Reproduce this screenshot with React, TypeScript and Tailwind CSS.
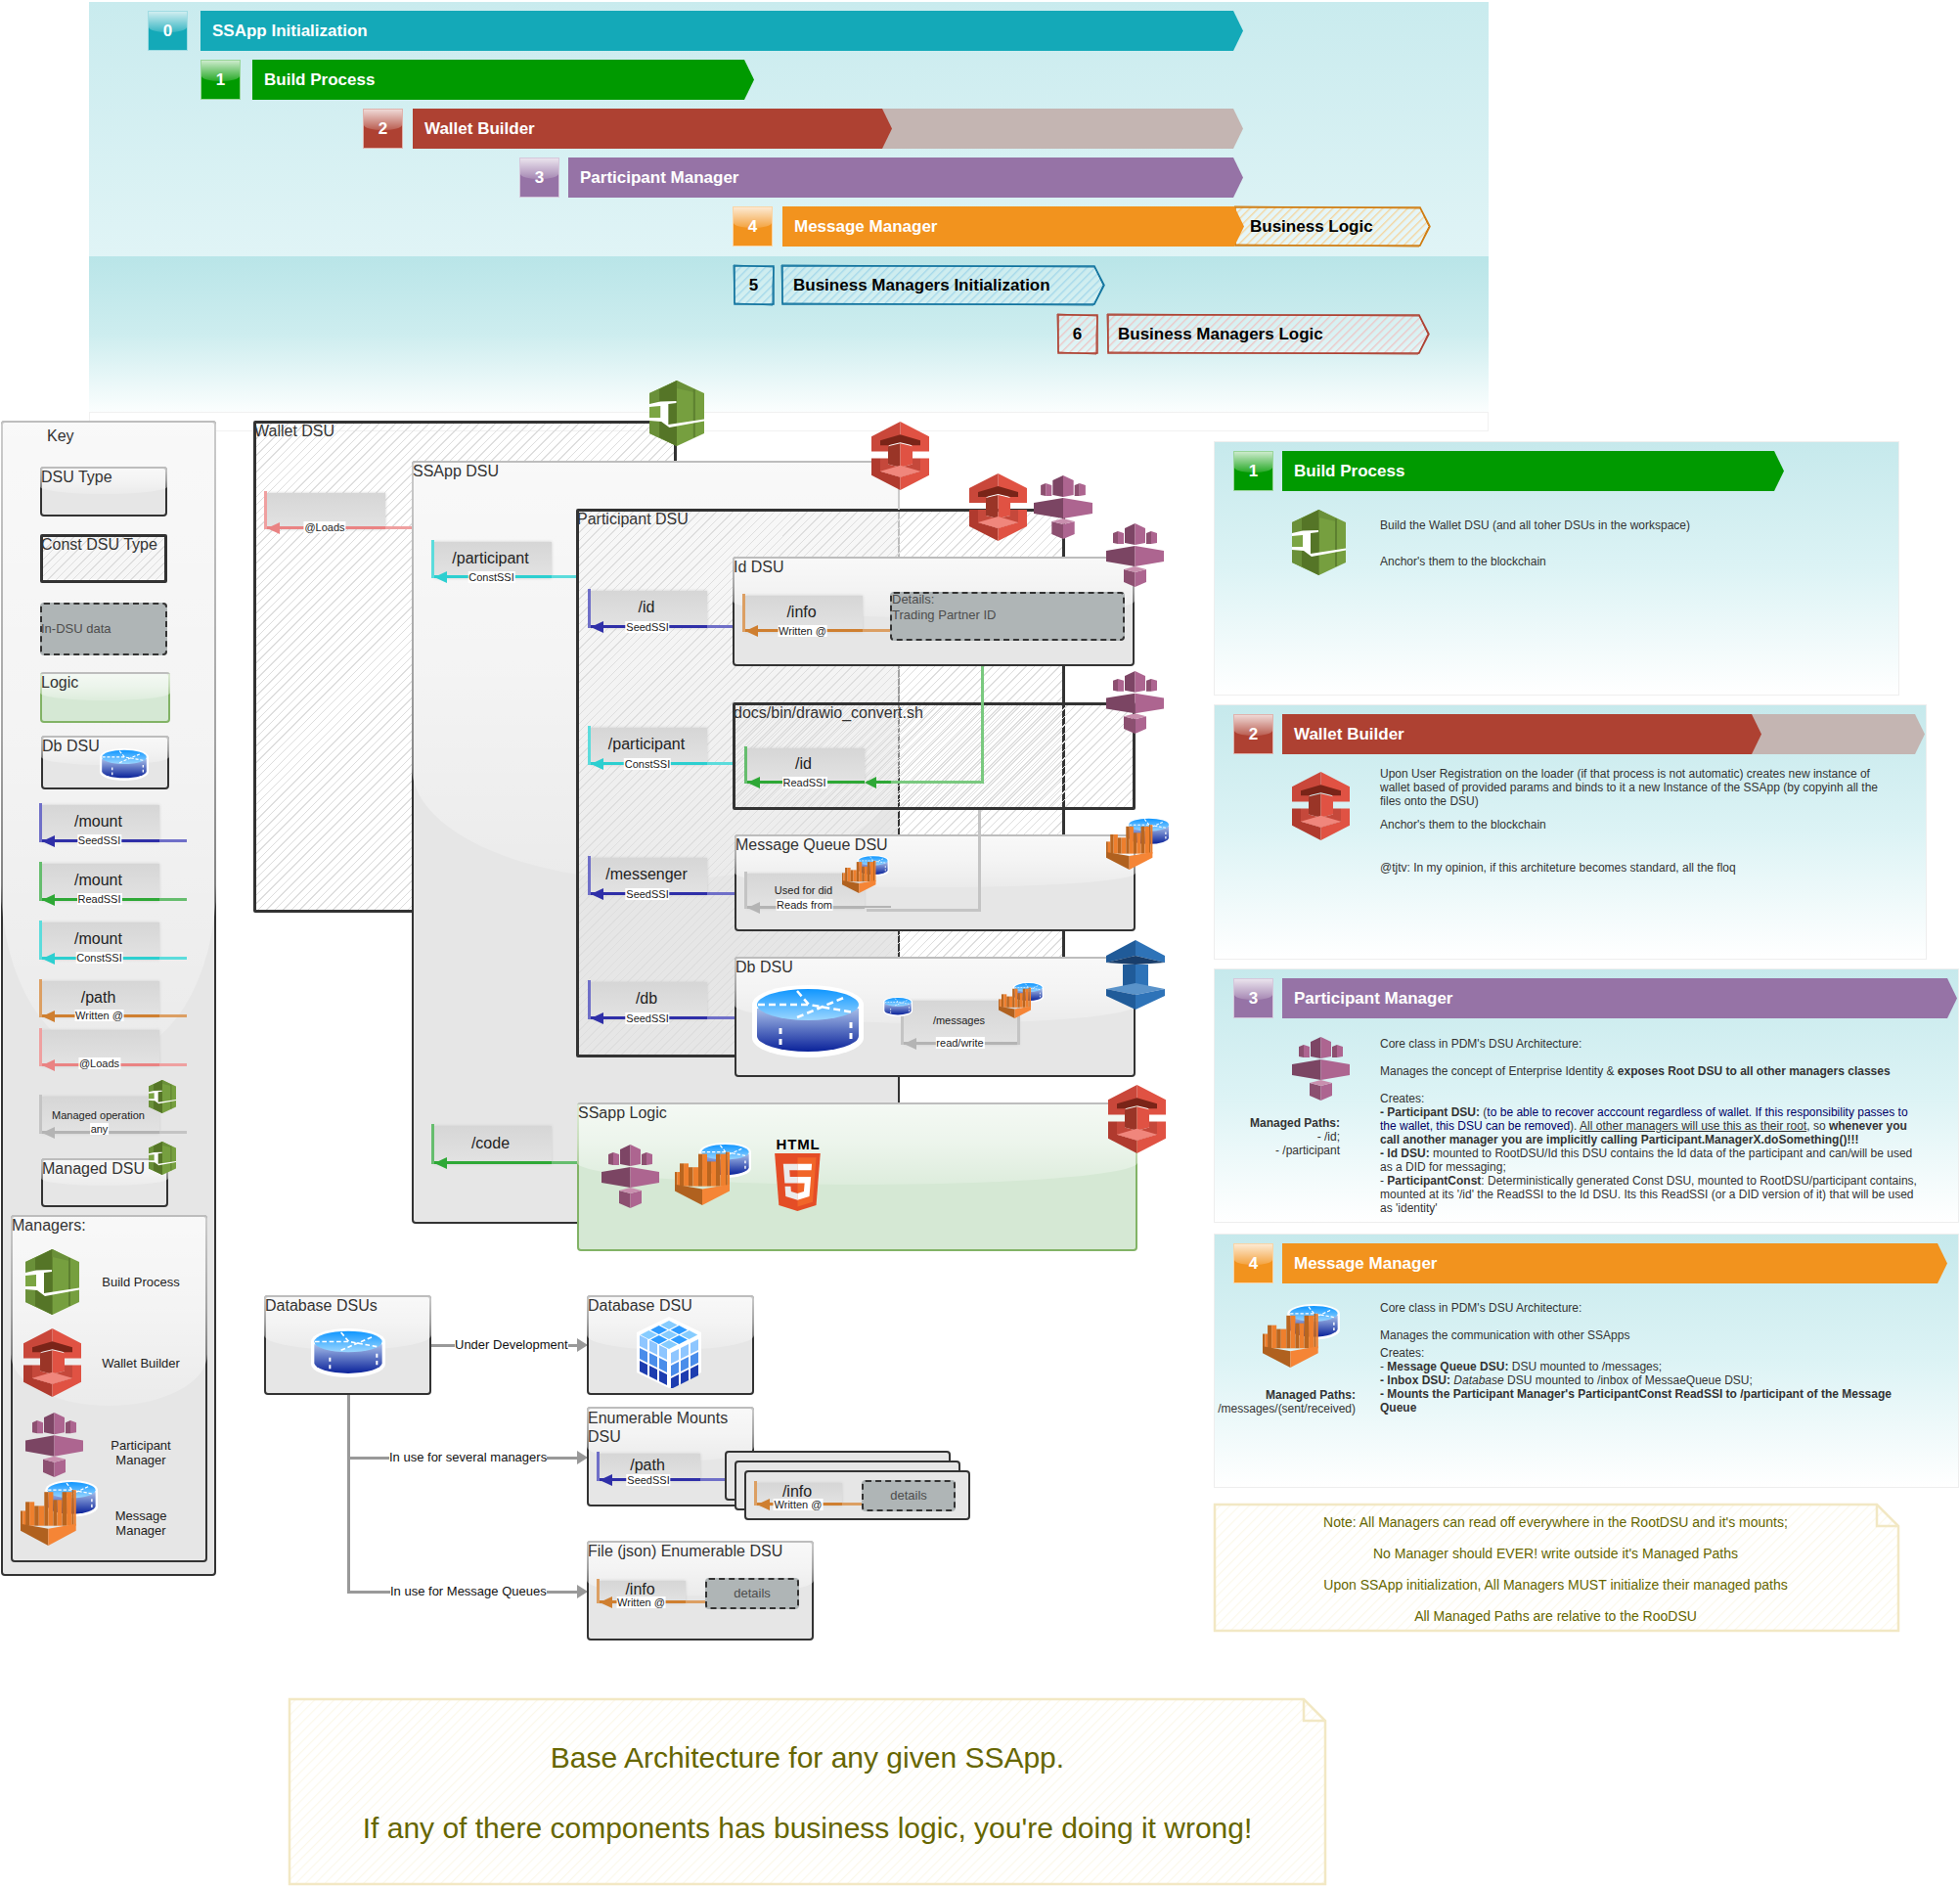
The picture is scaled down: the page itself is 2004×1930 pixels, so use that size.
import type { ReactNode } from "react";

type IconProps = { className: string };

const glass = "absolute inset-x-0 top-0 h-[55%] rounded-b-[50%_27%] bg-linear-to-b from-white/75 via-white/55 to-white/20";
const hatch = "bg-[repeating-linear-gradient(-45deg,#dedede_0px,#dedede_1px,transparent_1px,transparent_6px)]";
const chevron = "[clip-path:polygon(0_0,calc(100%-10px)_0,100%_50%,calc(100%-10px)_100%,0_100%)]";

const GreenIcon = ({ className }: IconProps) => (
    <svg viewBox="0 0 55 67" preserveAspectRatio="none" className={className}>
        <polygon points="27.5,0 55,13 55,54 27.5,67 0,54 0,13" fill="#769f3f" />
        <polygon points="27.5,0 0,13 0,54 27.5,67" fill="#6a9039" />
        <polygon points="27.5,0 10,9 10,58 27.5,67" fill="#557527" />
        <polygon points="27.5,0 45,9 45,12 27.5,8" fill="#6a9039" />
        <rect x="44" y="9" width="2" height="49" fill="#5d8030" />
        <polygon points="19,24 27.5,23 27.5,43 19,45" fill="#557527" />
        <polygon points="0,27 11,26 11,38 0,38" fill="#7ba543" />
        <path d="M0 24 L11 21.5 L27 21 L27 23 L19 24 L19 45 L55 39.5 L55 41.5 L20 48 L12 42 L0 41 L0 38 L11 38 L11 26 L0 27 Z" fill="#fff" />
    </svg>
);

const RedIcon = ({ className }: IconProps) => (
    <svg viewBox="0 0 59 69" preserveAspectRatio="none" className={className}>
        <polygon points="29.5,0 59,15 59,30 42,30 42,25 29.5,14 29.5,0" fill="#e05243" />
        <polygon points="29.5,0 0,15 0,30 17,30 17,25 29.5,14" fill="#c9473a" />
        <polygon points="9,19 29.5,13 50,19 50,24 42,24 29.5,21 17,24 9,24" fill="#7a2418" />
        <polygon points="17,25 29.5,22 29.5,46 17,43" fill="#9a3527" />
        <polygon points="29.5,22 42,25 42,43 29.5,46" fill="#e05243" />
        <polygon points="0,37 9,37 9,50 29.5,56 29.5,69 0,54" fill="#b03a2e" />
        <polygon points="59,37 50,37 50,50 29.5,56 29.5,69 59,54" fill="#e05243" />
        <polygon points="9,37 17,37 17,43 29.5,46 42,43 42,37 50,37 50,50 29.5,56 9,50" fill="#c5483b" />
        <polygon points="9,50 29.5,44 50,50 29.5,56" fill="#f0867c" />
    </svg>
);

const PurpleIcon = ({ className }: IconProps) => (
    <svg viewBox="0 0 59 65" preserveAspectRatio="none" className={className}>
        <polygon points="7,10 12,8 12,21 7,20" fill="#8c4f70" />
        <polygon points="12,8 18,10 18,21 12,21" fill="#ad6590" />
        <polygon points="41,10 46,8 46,21 41,21" fill="#8c4f70" />
        <polygon points="46,8 52,10 52,20 46,21" fill="#ad6590" />
        <polygon points="19,5 29.5,0 29.5,22 19,20" fill="#7d4565" />
        <polygon points="29.5,0 40,5 40,20 29.5,22" fill="#ad6590" />
        <polygon points="0,28 29.5,23 29.5,44 0,39" fill="#7b4563" />
        <polygon points="29.5,23 59,28 59,39 29.5,44" fill="#ad6590" />
        <polygon points="18,47 29.5,50 29.5,65 18,60" fill="#8c4f70" />
        <polygon points="29.5,50 41,47 41,60 29.5,65" fill="#ad6590" />
        <polygon points="18,47 29.5,44 41,47 29.5,50" fill="#c98fae" />
    </svg>
);

const BlueIcon = ({ className }: IconProps) => (
    <svg viewBox="0 0 60 71" preserveAspectRatio="none" className={className}>
        <polygon points="30,0 0,16 0,23 30,16" fill="#205b99" />
        <polygon points="30,0 60,16 60,23 30,16" fill="#2e73b8" />
        <polygon points="0,23 30,16 60,23 30,25" fill="#193e6b" />
        <rect x="17" y="25" width="13" height="22" fill="#205b99" />
        <rect x="30" y="25" width="13" height="22" fill="#2e73b8" />
        <polygon points="0,50 30,44 60,50 30,56" fill="#5a93ca" />
        <polygon points="0,50 30,56 30,71 0,57" fill="#205b99" />
        <polygon points="60,50 30,56 30,71 60,57" fill="#2e73b8" />
    </svg>
);

const DbShape = () => (
    <g>
        <defs>
            <linearGradient id="dbTop" x1="0" y1="0" x2="0" y2="1">
                <stop offset="0" stopColor="#0f96ff" />
                <stop offset="1" stopColor="#9bd6ff" />
            </linearGradient>
            <linearGradient id="dbBody" x1="0" y1="0" x2="0" y2="1">
                <stop offset="0" stopColor="#a6bde8" />
                <stop offset="1" stopColor="#0a229a" />
            </linearGradient>
        </defs>
        <path d="M0 20 A57 20 0 0 1 114 20 L114 54 A57 20 0 0 1 0 54 Z" fill="#fff" />
        <path d="M5 24 L5 52 A52 16 0 0 0 109 52 L109 24 Z" fill="url(#dbBody)" />
        <ellipse cx="57" cy="20" rx="52" ry="16" fill="url(#dbTop)" />
        <path d="M6 20 L58 20 M46 33 L96 12 M46 6 L58 20 L104 28" stroke="#fff" strokeWidth="2.5" strokeDasharray="7 4" fill="none" />
        <path d="M29 44 L29 62 M101 38 L101 56" stroke="#fff" strokeWidth="3" strokeDasharray="6 5" fill="none" />
    </g>
);

const DbIcon = ({ className }: IconProps) => (
    <svg viewBox="0 0 114 74" preserveAspectRatio="none" className={className}>
        <DbShape />
    </svg>
);

const QueueIcon = ({ className }: IconProps) => {
    const bars = [[0, 31, 5], [5, 22, 9], [14, 26, 10], [24, 12, 9], [33, 20, 9], [42, 12, 10], [52, 10, 4]];
    return (
        <svg viewBox="0 0 78 66" preserveAspectRatio="none" className={className}>
            <g transform="translate(25 0) scale(0.465 0.5)">
                <DbShape />
            </g>
            {bars.map(([x, y, w]) => (
                <g key={x}>
                    <rect x={x} y={y} width={w * 0.45} height={46 - y} fill="#b9651f" />
                    <rect x={x + w * 0.45} y={y} width={w * 0.55} height={46 - y} fill="#ee7f2d" />
                </g>
            ))}
            <polygon points="0,44 28,49 28,66 0,51" fill="#b0611f" />
            <polygon points="56,44 28,49 28,66 56,51" fill="#f58536" />
        </svg>
    );
};

const CubeIcon = ({ className }: IconProps) => {
    const cells = [0, 1, 2];
    const shades = ["#8ec6ff", "#4a8dea", "#1d3db0"];
    return (
        <svg viewBox="0 0 66 73" preserveAspectRatio="none" className={className}>
            <polygon points="33,0 66,16 66,57 33,73 0,57 0,16" fill="#fff" />
            {cells.map(i => cells.map(j => {
                const x = 33 + (i - j) * 10.3;
                const y = 3.5 + (i + j) * 5;
                return <polygon key={`t${i}${j}`} points={`${x},${y + 0.6} ${x + 8.6},${y + 5} ${x},${y + 9.4} ${x - 8.6},${y + 5}`} fill={(i + j) % 2 ? "#2f9bff" : "#86ccff"} />;
            }))}
            {cells.map(i => cells.map(j => {
                const x = 3 + i * 10;
                const y = 19 + i * 5 + j * 13;
                return <polygon key={`l${i}${j}`} points={`${x},${y} ${x + 8},${y + 4} ${x + 8},${y + 15} ${x},${y + 11}`} fill={shades[j]} />;
            }))}
            {cells.map(i => cells.map(j => {
                const x = 35 + i * 10;
                const y = 33 - i * 5 + j * 13;
                return <polygon key={`r${i}${j}`} points={`${x},${y + 4} ${x + 8},${y} ${x + 8},${y + 11} ${x},${y + 15}`} fill={shades[j]} />;
            }))}
        </svg>
    );
};

const Html5Icon = ({ className }: IconProps) => (
    <svg viewBox="0 0 512 512" preserveAspectRatio="none" className={className}>
        <path d="M71 460 L30 0 H481 L440 460 L255 512 Z" fill="#e44d26" />
        <path d="M256 472 L405 431 L440 37 H256 Z" fill="#f16529" />
        <path d="M256 208 H181 L176 150 H256 V94 H114 L129 265 H256 Z M256 355 L192 338 L188 293 H131 L138 382 L256 414 Z" fill="#ebebeb" />
        <path d="M255 208 V265 H325 L318 338 L255 355 V414 L372 382 L388 208 Z M255 94 V150 H392 L397 94 Z" fill="#fff" />
    </svg>
);

// glossy draw.io style box
const Box = ({ pos, title, titleClass = "-top-[1px]", fill = "bg-[#e6e6e6] border-[#333]", children }: { pos: string; title?: string; titleClass?: string; fill?: string; children?: ReactNode }) => (
    <div className={`border-2 rounded-[4px] ${fill} ${pos}`}>
        <div className="absolute -inset-[2px] rounded-[4px] overflow-hidden">
            <div className={glass} />
            <div className="absolute inset-x-0 top-0 h-[2px] bg-[#bdbdbd]" />
        </div>
        {title && <div className={`absolute -left-[1px] text-[16px] leading-[19px] text-[#333] whitespace-pre ${titleClass}`}>{title}</div>}
        {children}
    </div>
);

const HatchBox = ({ pos, title }: { pos: string; title?: string }) => (
    <div className={`rounded-[2px] border-[3px] border-[#333] ${hatch} ${pos}`}>
        {title && <div className="absolute -left-[2px] -top-[2px] text-[16px] leading-[19px] text-[#333] whitespace-pre">{title}</div>}
    </div>
);

const Data = ({ pos, children }: { pos: string; children: ReactNode }) => (
    <div className={`bg-[#afb5b6] border-2 border-dashed border-[#333] rounded-[4px] text-[13px] leading-[16px] text-[#4d4d4d] ${pos}`}>{children}</div>
);

const tones = {
    seed: { bar: "bg-[#6f6fc8]", line: "bg-[#2f2fa8]", head: "border-r-[#2f2fa8]" },
    read: { bar: "bg-[#66bd6e]", line: "bg-[#2ea836]", head: "border-r-[#2ea836]" },
    const: { bar: "bg-[#5cdcdc]", line: "bg-[#2ccfd0]", head: "border-r-[#2ccfd0]" },
    path: { bar: "bg-[#dc9f63]", line: "bg-[#cf7f30]", head: "border-r-[#cf7f30]" },
    load: { bar: "bg-[#efa0a0]", line: "bg-[#ea8383]", head: "border-r-[#ea8383]" },
    gray: { bar: "bg-[#c4c4c4]", line: "bg-[#b4b4b4]", head: "border-r-[#b4b4b4]" },
};

type MountProps = {
    pos: string;
    tone: keyof typeof tones;
    title?: string;
    titleClass?: string;
    label: string;
    labelClass?: string;
    tail?: string;
    children?: ReactNode;
};

const Mount = ({ pos, tone, title, titleClass = "top-[10px] text-[16px]", label, labelClass = "-bottom-[5px]", tail, children }: MountProps) => {
    const t = tones[tone];
    return (
        <div className={pos}>
            <div className="absolute left-[3px] right-0 top-[2px] bottom-0 bg-linear-to-b from-[#d6d6d6] to-[#e3e3e3] shadow-[0_0_3px_#ccc]" />
            <div className={`absolute left-0 top-0 bottom-0 w-[3px] ${t.bar}`} />
            <div className={`absolute left-[3px] right-0 bottom-0 h-[3px] ${t.line}`} />
            {tail && <div className={`absolute left-full bottom-0 h-[3px] ${t.bar} ${tail}`} />}
            <div className={`absolute left-[3px] -bottom-[5px] w-0 h-0 border-y-[6px] border-y-transparent border-r-[13px] ${t.head}`} />
            {title && <div className={`absolute left-0 right-[2px] text-center leading-[18px] text-[#222] whitespace-pre ${titleClass}`}>{title}</div>}
            {label && <div className={`absolute left-1/2 -translate-x-1/2 px-[1px] bg-white text-[11px] leading-[12px] text-[#222] whitespace-pre ${labelClass}`}>{label}</div>}
            {children}
        </div>
    );
};

const Bar = ({ pos, color, children }: { pos: string; color: string; children?: ReactNode }) => (
    <div className={`flex items-center pl-[12px] font-bold text-[17px] text-white whitespace-pre ${chevron} ${color} ${pos}`}>{children}</div>
);

const Num = ({ color, children }: { color: string; children: ReactNode }) => (
    <div className={`relative w-[41px] h-[41px] shrink-0 overflow-hidden flex items-center justify-center font-bold text-[17px] text-white border border-white/60 ${color}`}>
        <div className="absolute inset-x-0 top-0 h-[55%] rounded-b-[50%_25%] bg-linear-to-b from-white/80 to-white/15" />
        <span className="relative">{children}</span>
    </div>
);

const Sketch = ({ pos, w, h = 41, tip = 0, stroke, shade, id, children }: { pos: string; w: number; h?: number; tip?: number; stroke: string; shade: string; id: string; children: ReactNode }) => (
    <div className={`relative flex items-center font-bold text-[17px] text-black whitespace-pre ${pos}`}>
        <svg width={w} height={h} className="absolute left-0 top-0 overflow-visible">
            <defs>
                <pattern id={id} width="6" height="6" patternUnits="userSpaceOnUse" patternTransform="rotate(45)">
                    <rect width="6" height="6" fill="#ffffff" fillOpacity="0.25" />
                    <rect width="1.4" height="6" fill={shade} />
                </pattern>
            </defs>
            <polygon points={`1,1 ${w - tip},1 ${w},${h / 2} ${w - tip},${h - 1} 1,${h - 1}`} fill={`url(#${id})`} stroke={stroke} strokeWidth="1.5" />
            <polyline points={`0,0 ${w - tip},2 ${w - 1},${h / 2} ${w - tip - 1},${h} 1,${h - 2} 0,0`} fill="none" stroke={stroke} strokeWidth="1" />
        </svg>
        <span className="relative">{children}</span>
    </div>
);

const Note = ({ pos, w, h, id, children }: { pos: string; w: number; h: number; id: string; children: ReactNode }) => (
    <div className={`relative ${pos}`}>
        <svg width={w} height={h} className="absolute left-0 top-0">
            <defs>
                <pattern id={id} width="7" height="7" patternUnits="userSpaceOnUse" patternTransform="rotate(45)">
                    <rect width="1.2" height="7" fill="#fbf8ea" />
                </pattern>
            </defs>
            <path d={`M2 2 H${w - 24} L${w - 2} 24 V${h - 2} H2 Z`} fill={`url(#${id})`} stroke="#f2e8c4" strokeWidth="2.5" />
            <path d={`M${w - 24} 2 V24 H${w - 2}`} fill="none" stroke="#f2e8c4" strokeWidth="2.5" />
        </svg>
        {children}
    </div>
);

const Line = ({ pos, color = "bg-[#999]" }: { pos: string; color?: string }) => <div className={`absolute ${color} ${pos}`} />;

const ArrowHead = ({ pos }: { pos: string }) => (
    <div className={`absolute w-0 h-0 border-y-[7px] border-y-transparent border-l-[11px] border-l-[#999] ${pos}`} />
);

const Wire = ({ pos, children }: { pos: string; children: ReactNode }) => (
    <div className={`absolute bg-white text-[13px] leading-[16px] text-[#111] whitespace-pre ${pos}`}>{children}</div>
);

type CardProps = {
    size: string;
    num: string;
    color: string;
    header: ReactNode;
    side: ReactNode;
    sideClass: string;
    bodyClass: string;
    children: ReactNode;
};

const Card = ({ size, num, color, header, side, sideClass, bodyClass, children }: CardProps) => (
    <section className={`shrink-0 flex flex-col border border-[#eeeeee] bg-linear-to-b from-[#c6e9ec] via-[#dcf3f5] to-white pt-[9px] pl-[19px] ${size}`}>
        <div className="flex gap-[9px]">
            <Num color={color}>{num}</Num>
            {header}
        </div>
        <div className="flex">
            <div className={`w-[150px] shrink-0 flex flex-col ${sideClass}`}>{side}</div>
            <div className={`text-[12px] leading-[14px] text-[#333] whitespace-pre ${bodyClass}`}>{children}</div>
        </div>
    </section>
);

const App = () => {
    return (
        <div className="relative w-[2004px] h-[1930px] overflow-hidden bg-white font-['Liberation_Sans',Arial,sans-serif]">
            {/* timeline */}
            <div className="absolute left-[91px] top-[2px] w-[1431px] flex flex-col">
                <div className="h-[260px] flex flex-col gap-[9px] pt-[9px] bg-linear-to-b from-[#c9ebee] to-[#e0f4f6]">
                    <div className="flex gap-[13px] ml-[60px]">
                        <Num color="bg-[#14a9b8]">0</Num>
                        <Bar pos="w-[1066px] h-[41px]" color="bg-[#14a9b8]">SSApp Initialization</Bar>
                    </div>
                    <div className="flex gap-[12px] ml-[114px]">
                        <Num color="bg-[#009a00]">1</Num>
                        <Bar pos="w-[513px] h-[41px]" color="bg-[#009a00]">Build Process</Bar>
                    </div>
                    <div className="flex gap-[10px] ml-[280px]">
                        <Num color="bg-[#ae4132]">2</Num>
                        <div className="relative">
                            <Bar pos="w-[849px] h-[41px]" color="bg-[#c4b5b2]" />
                            <Bar pos="absolute left-0 top-0 w-[490px] h-[41px]" color="bg-[#ae4132]">Wallet Builder</Bar>
                        </div>
                    </div>
                    <div className="flex gap-[9px] ml-[440px]">
                        <Num color="bg-[#9673a6]">3</Num>
                        <Bar pos="w-[690px] h-[41px]" color="bg-[#9673a6]">Participant Manager</Bar>
                    </div>
                    <div className="flex ml-[658px]">
                        <Num color="bg-[#f2931e]">4</Num>
                        <Bar pos="relative z-10 ml-[10px] w-[472px] h-[41px]" color="bg-[#f2931e]">Message Manager</Bar>
                        <Sketch pos="-ml-[10px] w-[200px] h-[41px] pl-[16px]" w={200} tip={10} stroke="#d07c10" shade="#f3d5a0" id="hatchBiz">Business Logic</Sketch>
                    </div>
                </div>
                <div className="h-[159px] flex flex-col gap-[9px] pt-[9px] bg-linear-to-b from-[#b9e5e8] via-[#cdedef] to-[#fbfefe]">
                    <div className="flex gap-[8px] ml-[659px]">
                        <Sketch pos="w-[41px] h-[41px] justify-center" w={41} stroke="#10739e" shade="#a5d8ea" id="hatch5">5</Sketch>
                        <Sketch pos="w-[330px] h-[41px] pl-[12px]" w={330} tip={10} stroke="#10739e" shade="#a5d8ea" id="hatch5b">Business Managers Initialization</Sketch>
                    </div>
                    <div className="flex gap-[10px] ml-[990px]">
                        <Sketch pos="w-[41px] h-[41px] justify-center" w={41} stroke="#ae4132" shade="#ecc7c7" id="hatch6">6</Sketch>
                        <Sketch pos="w-[329px] h-[41px] pl-[11px]" w={329} tip={10} stroke="#ae4132" shade="#ecc7c7" id="hatch6b">Business Managers Logic</Sketch>
                    </div>
                </div>
                <div className="h-[20px] border border-[#f1f1f1]" />
            </div>

            {/* key */}
            <Box pos="absolute left-[1px] top-[430px] w-[220px] h-[1181px]">
                <div className="relative flex flex-col items-start pl-[38px] pt-[4px] text-[16px]">
                    <div className="ml-[7px] leading-[19px] text-[#333]">Key</div>
                    <Box pos="relative mt-[22px] w-[130px] h-[51px]" title="DSU Type" />
                    <HatchBox pos="relative mt-[18px] w-[130px] h-[50px]" title="Const DSU Type" />
                    <Data pos="relative mt-[20px] w-[130px] h-[54px] flex items-center"><span className="-ml-[1px]">In-DSU data</span></Data>
                    <Box pos="relative mt-[17px] w-[133px] h-[52px]" title="Logic" titleClass="-top-[1px] text-[#111]" fill="bg-[#d5e8d4] border-[#82b366]" />
                    <Box pos="relative mt-[13px] ml-[1px] w-[131px] h-[55px]" title="Db DSU">
                        <DbIcon className="absolute left-[58px] top-[11px] w-[50px] h-[33px]" />
                    </Box>
                    <Mount pos="relative mt-[14px] -ml-[1px] w-[123px] h-[40px]" tone="seed" title="/mount" tail="w-[28px]" label="SeedSSI" labelClass="-bottom-[4px]" />
                    <Mount pos="relative mt-[20px] -ml-[1px] w-[123px] h-[40px]" tone="read" title="/mount" tail="w-[28px]" label="ReadSSI" labelClass="-bottom-[4px]" />
                    <Mount pos="relative mt-[20px] -ml-[1px] w-[123px] h-[40px]" tone="const" title="/mount" tail="w-[28px]" label="ConstSSI" labelClass="-bottom-[4px]" />
                    <Mount pos="relative mt-[20px] -ml-[1px] w-[123px] h-[39px]" tone="path" title="/path" tail="w-[28px]" label="Written @" labelClass="-bottom-[4px]" />
                    <Mount pos="relative mt-[11px] -ml-[1px] w-[123px] h-[39px]" tone="load" tail="w-[28px]" label="@Loads" labelClass="-bottom-[3px]" />
                    <Mount pos="relative mt-[29px] -ml-[1px] w-[123px] h-[40px]" tone="gray" title="Managed operation" titleClass="top-[12px] text-[11px]" tail="w-[28px]" label="any" labelClass="-bottom-[1px]">
                        <GreenIcon className="absolute left-[112px] -top-[15px] w-[28px] h-[34px]" />
                    </Mount>
                    <Box pos="relative mt-[25px] ml-[1px] w-[130px] h-[50px]" title="Managed DSU">
                        <GreenIcon className="absolute left-[108px] -top-[19px] w-[28px] h-[34px]" />
                    </Box>
                    <Box pos="relative mt-[8px] -ml-[30px] w-[201px] h-[355px]" title="Managers:">
                        <div className="relative flex flex-col pt-[33px] text-[13px] leading-[15px] text-[#222] text-center">
                            <div className="grid grid-cols-[71px_120px] items-center">
                                <GreenIcon className="ml-[13px] w-[55px] h-[67px]" />
                                <div>Build Process</div>
                            </div>
                            <div className="mt-[14px] grid grid-cols-[71px_120px] items-center">
                                <RedIcon className="ml-[11px] w-[59px] h-[70px]" />
                                <div>Wallet Builder</div>
                            </div>
                            <div className="mt-[16px] grid grid-cols-[71px_120px] items-center">
                                <PurpleIcon className="ml-[13px] w-[59px] h-[66px]" />
                                <div className="mt-[16px]">Participant<br />Manager</div>
                            </div>
                            <div className="mt-[3px] grid grid-cols-[71px_120px] items-center">
                                <QueueIcon className="ml-[8px] w-[79px] h-[67px]" />
                                <div className="mt-[20px]">Message<br />Manager</div>
                            </div>
                        </div>
                    </Box>
                </div>
            </Box>

            {/* wallet dsu */}
            <HatchBox pos="absolute left-[259px] top-[430px] w-[433px] h-[503px]" title="Wallet DSU" />
            <Mount pos="absolute left-[270px] top-[502px] w-[124px] h-[39px]" tone="load" tail="w-[27px]" label="@Loads" labelClass="-bottom-[4px]" />
            <GreenIcon className="absolute left-[664px] top-[389px] w-[56px] h-[67px]" />

            {/* ssapp dsu */}
            <Box pos="absolute left-[421px] top-[471px] w-[499px] h-[780px]" title="SSApp DSU" />
            <Mount pos="absolute left-[441px] top-[552px] w-[123px] h-[39px]" tone="const" title="/participant" tail="w-[27px]" label="ConstSSI" />
            <Mount pos="absolute left-[441px] top-[1149px] w-[123px] h-[41px]" tone="read" title="/code" titleClass="top-[11px] text-[16px]" tail="w-[27px]" label="" />

            {/* participant dsu */}
            <HatchBox pos="absolute left-[589px] top-[520px] w-[500px] h-[561px]" title="Participant DSU" />
            <RedIcon className="absolute left-[891px] top-[431px] w-[59px] h-[70px]" />
            <RedIcon className="absolute left-[991px] top-[484px] w-[59px] h-[69px]" />
            <PurpleIcon className="absolute left-[1057px] top-[486px] w-[60px] h-[65px]" />
            <Line pos="left-[918px] top-[501px] w-[2px] h-[20px]" color="bg-[#ccc]" />

            <Mount pos="absolute left-[601px] top-[602px] w-[122px] h-[40px]" tone="seed" title="/id" tail="w-[27px]" label="SeedSSI" />
            <Mount pos="absolute left-[601px] top-[742px] w-[122px] h-[40px]" tone="const" title="/participant" tail="w-[27px]" label="ConstSSI" />
            <Mount pos="absolute left-[601px] top-[875px] w-[122px] h-[40px]" tone="seed" title="/messenger" tail="w-[29px]" label="SeedSSI" />
            <Mount pos="absolute left-[601px] top-[1002px] w-[122px] h-[40px]" tone="seed" title="/db" tail="w-[29px]" label="SeedSSI" />

            {/* id dsu */}
            <Box pos="absolute left-[749px] top-[569px] w-[411px] h-[112px]" title="Id DSU" />
            <Mount pos="absolute left-[759px] top-[607px] w-[123px] h-[39px]" tone="path" title="/info" tail="w-[28px]" label="Written @" />
            <Data pos="absolute left-[910px] top-[605px] w-[240px] h-[50px]"><div className="-mt-[2px]">Details:</div><div>Trading Partner ID</div></Data>
            <PurpleIcon className="absolute left-[1131px] top-[535px] w-[59px] h-[65px]" />

            {/* docs */}
            <HatchBox pos="absolute left-[749px] top-[718px] w-[412px] h-[110px]" title="docs/bin/drawio_convert.sh" />
            <Line pos="left-[1003px] top-[681px] w-[3px] h-[120px]" color="bg-[#7ac97f]" />
            <Line pos="left-[886px] top-[798px] w-[120px] h-[3px]" color="bg-[#7ac97f]" />
            <Mount pos="absolute left-[761px] top-[763px] w-[123px] h-[38px]" tone="read" title="/id" titleClass="top-[9px] text-[16px]" label="ReadSSI" />
            <div className="absolute left-[884px] top-[794px] w-0 h-0 border-y-[6px] border-y-transparent border-r-[12px] border-r-[#2ea836]" />
            <Line pos="left-[893px] top-[798px] w-[18px] h-[3px]" color="bg-[#2ea836]" />
            <PurpleIcon className="absolute left-[1131px] top-[686px] w-[59px] h-[64px]" />

            {/* message queue */}
            <Box pos="absolute left-[751px] top-[853px] w-[410px] h-[99px]" title="Message Queue DSU" />
            <Line pos="left-[1000px] top-[828px] w-[3px] h-[104px]" color="bg-[#c4c4c4]" />
            <Line pos="left-[886px] top-[929px] w-[117px] h-[3px]" color="bg-[#c4c4c4]" />
            <Mount pos="absolute left-[761px] top-[891px] w-[123px] h-[38px]" tone="gray" title="Used for did" titleClass="top-[10px] text-[11px]" label="Reads from" labelClass="-bottom-[2px]" />
            <Line pos="left-[884px] top-[926px] w-[27px] h-[2px]" color="bg-[#b4b4b4]" />
            <QueueIcon className="absolute left-[861px] top-[874px] w-[48px] h-[39px]" />
            <QueueIcon className="absolute left-[1131px] top-[835px] w-[66px] h-[54px]" />

            {/* db dsu */}
            <Box pos="absolute left-[751px] top-[978px] w-[410px] h-[123px]" title="Db DSU" />
            <DbIcon className="absolute left-[769px] top-[1007px] w-[114px] h-[74px]" />
            <Mount pos="absolute left-[921px] top-[1021px] w-[121px] h-[47px]" tone="gray" title="/messages" titleClass="top-[13px] text-[11px]" label="read/write" labelClass="-bottom-[4px]" />
            <Line pos="left-[1040px] top-[1030px] w-[3px] h-[38px]" color="bg-[#c4c4c4]" />
            <DbIcon className="absolute left-[903px] top-[1019px] w-[30px] h-[20px]" />
            <QueueIcon className="absolute left-[1021px] top-[1004px] w-[46px] h-[37px]" />
            <BlueIcon className="absolute left-[1131px] top-[961px] w-[60px] h-[71px]" />

            {/* ssapp logic */}
            <Box pos="absolute left-[590px] top-[1127px] w-[573px] h-[152px]" title="SSapp Logic" fill="bg-[#d5e8d4] border-[#82b366]" />
            <PurpleIcon className="absolute left-[615px] top-[1170px] w-[59px] h-[65px]" />
            <QueueIcon className="absolute left-[690px] top-[1168px] w-[78px] h-[64px]" />
            <div className="absolute left-[789px] top-[1161px] w-[54px] text-center font-black text-[15px] leading-[18px] tracking-[0.8px] text-black">HTML</div>
            <Html5Icon className="absolute left-[789px] top-[1179px] w-[53px] h-[59px]" />
            <RedIcon className="absolute left-[1133px] top-[1109px] w-[59px] h-[70px]" />

            {/* database dsus */}
            <Line pos="left-[441px] top-[1374px] w-[151px] h-[3px]" />
            <ArrowHead pos="left-[590px] top-[1368px]" />
            <Line pos="left-[355px] top-[1426px] w-[3px] h-[203px]" />
            <Line pos="left-[355px] top-[1489px] w-[237px] h-[3px]" />
            <ArrowHead pos="left-[590px] top-[1483px]" />
            <Line pos="left-[355px] top-[1626px] w-[237px] h-[3px]" />
            <ArrowHead pos="left-[590px] top-[1620px]" />
            <Wire pos="left-[465px] top-[1367px]">Under Development</Wire>
            <Wire pos="left-[398px] top-[1482px]">In use for several managers</Wire>
            <Wire pos="left-[399px] top-[1619px]">In use for Message Queues</Wire>

            <Box pos="absolute left-[270px] top-[1324px] w-[171px] h-[102px]" title="Database DSUs" />
            <DbIcon className="absolute left-[318px] top-[1358px] w-[76px] h-[50px]" />
            <Box pos="absolute left-[600px] top-[1324px] w-[171px] h-[102px]" title="Database DSU" />
            <CubeIcon className="absolute left-[651px] top-[1346px] w-[66px] h-[73px]" />

            <Box pos="absolute left-[600px] top-[1438px] w-[171px] h-[102px]" title={"Enumerable Mounts\nDSU"} titleClass="top-0" />
            <Mount pos="absolute left-[610px] top-[1484px] w-[106px] h-[30px]" tone="seed" title="/path" titleClass="top-[5px] text-[16px]" tail="w-[26px]" label="SeedSSI" />
            <div className="absolute left-[741px] top-[1483px] w-[231px] h-[51px] border-2 border-[#333] rounded-[4px] bg-[#e6e6e6]" />
            <div className="absolute left-[751px] top-[1493px] w-[231px] h-[51px] border-2 border-[#333] rounded-[4px] bg-[#e6e6e6]" />
            <div className="absolute left-[761px] top-[1503px] w-[231px] h-[51px] border-2 border-[#333] rounded-[4px] bg-[#e6e6e6]" />
            <Mount pos="absolute left-[771px] top-[1514px] w-[90px] h-[25px]" tone="path" title="/info" titleClass="top-[2px] text-[16px]" tail="w-[21px]" label="Written @" />
            <Data pos="absolute left-[881px] top-[1513px] w-[96px] h-[32px] flex items-center justify-center">details</Data>

            <Box pos="absolute left-[600px] top-[1575px] w-[232px] h-[102px]" title="File (json) Enumerable DSU" />
            <Mount pos="absolute left-[610px] top-[1614px] w-[91px] h-[25px]" tone="path" title="/info" titleClass="top-[2px] text-[16px]" tail="w-[21px]" label="Written @" />
            <Data pos="absolute left-[721px] top-[1613px] w-[96px] h-[32px] flex items-center justify-center">details</Data>

            {/* manager cards */}
            <div className="absolute left-[1241px] top-[451px] w-[763px] flex flex-col items-start">
                <Card
                    size="w-[701px] h-[260px]"
                    num="1"
                    color="bg-[#009a00]"
                    header={<Bar pos="w-[513px] h-[41px]" color="bg-[#009a00]">Build Process</Bar>}
                    sideClass="pl-[60px] pt-[19px]"
                    side={<GreenIcon className="w-[55px] h-[67px]" />}
                    bodyClass="pt-[28px]"
                >
                    Build the Wallet DSU (and all toher DSUs in the workspace)
                    <p className="mt-[23px]">Anchor's them to the blockchain</p>
                </Card>
                <div className="h-[9px]" />
                <Card
                    size="w-[729px] h-[261px]"
                    num="2"
                    color="bg-[#ae4132]"
                    header={
                        <div className="relative">
                            <Bar pos="w-[657px] h-[41px]" color="bg-[#c4b5b2]" />
                            <Bar pos="absolute left-0 top-0 w-[490px] h-[41px]" color="bg-[#ae4132]">Wallet Builder</Bar>
                        </div>
                    }
                    sideClass="pl-[60px] pt-[18px]"
                    side={<RedIcon className="w-[59px] h-[70px]" />}
                    bodyClass="pt-[13px]"
                >
                    Upon User Registration on the loader (if that process is not automatic) creates new instance of<br />
                    wallet based of provided params and binds to it a new Instance of the SSApp (by copyinh all the<br />
                    files onto the DSU)
                    <p className="mt-[10px]">Anchor's them to the blockchain</p>
                    <p className="mt-[30px]">@tjtv: In my opinion, if this architeture becomes standard, all the floq</p>
                </Card>
                <div className="h-[9px]" />
                <Card
                    size="w-[762px] h-[260px]"
                    num="3"
                    color="bg-[#9673a6]"
                    header={<Bar pos="w-[690px] h-[41px]" color="bg-[#9673a6]">Participant Manager</Bar>}
                    sideClass="pl-[60px] pt-[19px]"
                    side={
                        <>
                            <PurpleIcon className="w-[59px] h-[65px]" />
                            <div className="mt-[16px] -ml-[60px] pr-[41px] text-right text-[12px] leading-[14px] text-[#333] whitespace-pre"><b>Managed Paths:</b><br />- /id;<br />- /participant</div>
                        </>
                    }
                    bodyClass="pt-[19px]"
                >
                    Core class in PDM's DSU Architecture:<br /><br />
                    Manages the concept of Enterprise Identity &amp; <b>exposes Root DSU to all other managers classes</b><br /><br />
                    Creates:<br />
                    <b>- Participant DSU:</b> (<span className="text-[#000066]">to be able to recover acccount regardless of wallet. If this responsibility passes to<br />
                    the wallet, this DSU can be removed</span>). <u>All other managers will use this as their root</u>, so <b>whenever you<br />
                    call another manager you are implicitly calling Participant.ManagerX.doSomething()!!!</b><br />
                    <b>- Id DSU:</b> mounted to RootDSU/Id this DSU contains the Id data of the participant and can/will be used<br />
                    as a DID for messaging;<br />
                    - <b>ParticipantConst</b>: Deterministically generated Const DSU, mounted to RootDSU/participant contains,<br />
                    mounted at its '/id' the ReadSSI to the Id DSU. Its this ReadSSI (or a DID version of it) that will be used<br />
                    as 'identity'
                </Card>
                <div className="h-[11px]" />
                <Card
                    size="w-[762px] h-[260px]"
                    num="4"
                    color="bg-[#f2931e]"
                    header={<Bar pos="w-[680px] h-[41px]" color="bg-[#f2931e]">Message Manager</Bar>}
                    sideClass="pl-[30px] pt-[21px]"
                    side={
                        <>
                            <QueueIcon className="w-[79px] h-[65px]" />
                            <div className="mt-[21px] -ml-[60px] pr-[25px] text-right text-[12px] leading-[14px] text-[#333] whitespace-pre"><b>Managed Paths:</b><br />/messages/(sent/received)</div>
                        </>
                    }
                    bodyClass="pt-[18px]"
                >
                    Core class in PDM's DSU Architecture:<br /><br />
                    Manages the communication with other SSApps
                    <p className="mt-[4px]">
                        Creates:<br />
                        - <b>Message Queue DSU:</b> DSU mounted to /messages;<br />
                        <b>- Inbox DSU:</b> <i>Database</i> DSU mounted to /inbox of MessaeQueue DSU;<br />
                        <b>- Mounts the Participant Manager's ParticipantConst ReadSSI to /participant of the Message<br />
                        Queue</b>
                    </p>
                </Card>
                <div className="h-[15px]" />
                <Note pos="-ml-[1px] w-[703px] h-[133px]" w={703} h={133} id="hatchNote">
                    <div className="relative pt-[4px] pr-[2px] text-center text-[14px] leading-[32px] text-[#666600]">
                        Note: All Managers can read off everywhere in the RootDSU and it's mounts;<br />
                        No Manager should EVER! write outside it's Managed Paths<br />
                        Upon SSApp initialization, All Managers MUST initialize their managed paths<br />
                        All Managed Paths are relative to the RooDSU
                    </div>
                </Note>
            </div>

            <Note pos="!absolute left-[294px] top-[1735px] w-[1063px] h-[193px]" w={1063} h={193} id="hatchBig">
                <div className="relative pt-[26px] text-center text-[30px] leading-[72px] text-[#666600]">
                    Base Architecture for any given SSApp.<br />
                    If any of there components has business logic, you're doing it wrong!
                </div>
            </Note>
        </div>
    );
};

export default App;
